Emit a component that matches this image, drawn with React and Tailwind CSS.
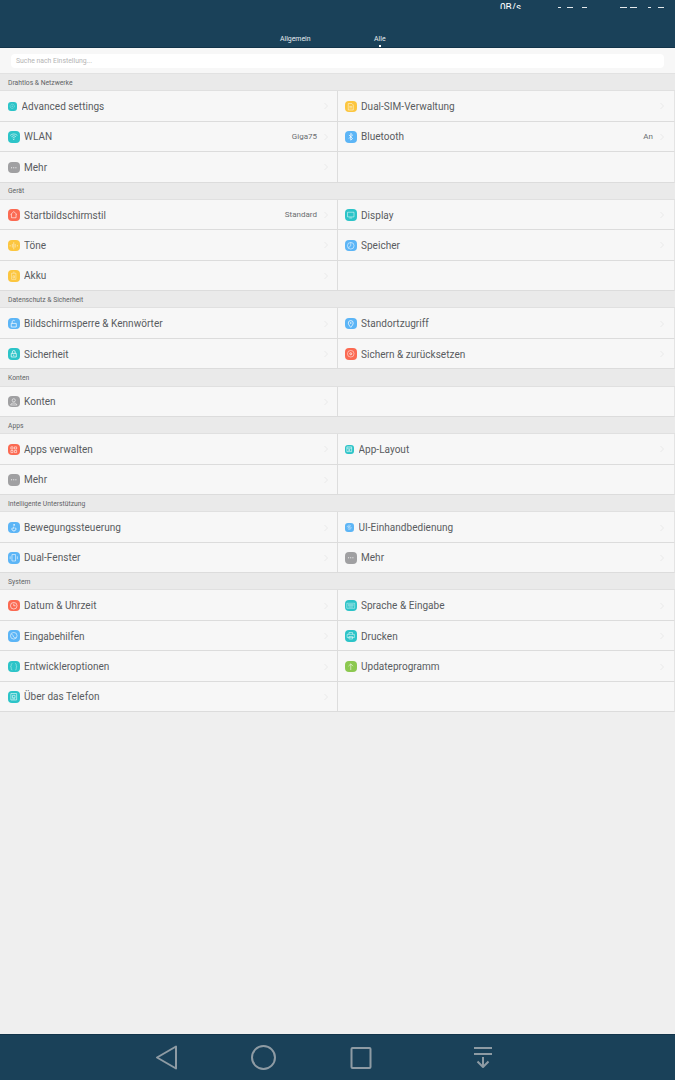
const ICONS = {
  gear: (
    <>
      <circle cx="8" cy="8" r="4" fill="none" stroke="#fff" strokeOpacity=".5" strokeWidth="1.4" strokeDasharray="1.4 .7" />
      <circle cx="8" cy="8" r="1.5" fill="#fff" fillOpacity=".35" />
    </>
  ),
  wifi: (
    <>
      <path d="M3 6.2a7 7 0 0 1 10 0M4.8 8a4.5 4.5 0 0 1 6.4 0M6.5 9.8a2 2 0 0 1 3 0" fill="none" stroke="#fff" strokeOpacity=".75" strokeWidth="1" />
      <circle cx="8" cy="11.6" r=".9" fill="#fff" fillOpacity=".8" />
    </>
  ),
  more: (
    <>
      <circle cx="5" cy="8" r=".8" fill="#fff" />
      <circle cx="8" cy="8" r=".8" fill="#fff" />
      <circle cx="11" cy="8" r=".8" fill="#fff" />
    </>
  ),
  sim: <path d="M4.5 3.5h5l2 2v7h-7zM6 7.5h4M6 9.5h4" fill="none" stroke="#fff" strokeOpacity=".7" strokeWidth="1" />,
  bluetooth: <path d="M5.5 5.5l5 5-2.5 2.2V3.3l2.5 2.2-5 5" fill="none" stroke="#fff" strokeWidth="1" />,
  home: <path d="M3.5 7.8L8 3.6l4.5 4.2M4.8 7v5.2h6.4V7" fill="none" stroke="#fff" strokeOpacity=".85" strokeWidth="1" />,
  sound: <path d="M8 3v10M6 5.5v5M10 5.5v5M3 7v2M13 7v2" fill="none" stroke="#fff" strokeOpacity=".65" strokeWidth="1" />,
  battery: <path d="M5 4.5h6v8.5H5zM6.8 3h2.4M7 8h2v3H7z" fill="none" stroke="#fff" strokeOpacity=".55" strokeWidth="1" />,
  display: <path d="M3.5 4.5h9v6.5h-9zM6 12.5h4" fill="none" stroke="#fff" strokeOpacity=".7" strokeWidth="1" />,
  storage: (
    <>
      <circle cx="8" cy="8" r="4.6" fill="none" stroke="#fff" strokeOpacity=".75" strokeWidth="1" />
      <path d="M8 3.4V8L4.6 11" fill="none" stroke="#fff" strokeOpacity=".75" strokeWidth="1" />
    </>
  ),
  lockOpen: <path d="M4.5 7.5h7v5h-7zM5.8 7.5V5.2a2 2 0 0 1 3.7-1" fill="none" stroke="#fff" strokeWidth="1" />,
  lock: (
    <>
      <path d="M4.5 7.5h7v5h-7zM6 7.5V5.5a2 2 0 0 1 4 0v2" fill="none" stroke="#fff" strokeWidth="1" />
      <circle cx="8" cy="10" r=".8" fill="#fff" />
    </>
  ),
  pin: (
    <>
      <path d="M8 13c-2-2.5-3.4-4.2-3.4-6a3.4 3.4 0 0 1 6.8 0c0 1.8-1.4 3.5-3.4 6z" fill="none" stroke="#fff" strokeWidth="1" />
      <circle cx="8" cy="7" r="1" fill="#fff" />
    </>
  ),
  backup: (
    <>
      <circle cx="8" cy="8" r="4.6" fill="none" stroke="#fff" strokeOpacity=".7" strokeWidth="1" />
      <circle cx="8" cy="8" r="1.4" fill="none" stroke="#fff" strokeWidth="1" />
    </>
  ),
  user: (
    <>
      <circle cx="8" cy="6" r="2.2" fill="none" stroke="#fff" strokeOpacity=".8" strokeWidth="1" />
      <path d="M3.6 12.5c.5-2 2.3-2.7 4.4-2.7s3.9.7 4.4 2.7z" fill="none" stroke="#fff" strokeOpacity=".8" strokeWidth="1" />
    </>
  ),
  apps: <path d="M4 4h3v3H4zM9 4h3v3H9zM4 9h3v3H4zM9 9h3v3H9z" fill="none" stroke="#fff" strokeOpacity=".8" strokeWidth="1" />,
  appLayout: <path d="M3.5 3.5h9v9h-9zM3.5 6h9M7 8.5h2v2H7z" fill="none" stroke="#fff" strokeWidth="1.1" />,
  motion: (
    <>
      <circle cx="8.5" cy="4" r="1.1" fill="#fff" />
      <path d="M8 6.5v3M6 8a2.8 2.8 0 1 0 4.5 0" fill="none" stroke="#fff" strokeWidth="1.1" />
    </>
  ),
  oneHand: <path d="M4 8a4 4 0 0 1 7-2.6M12 8a4 4 0 0 1-7 2.6M6.5 6.5h3v3h-3z" fill="none" stroke="#fff" strokeOpacity=".8" strokeWidth="1" />,
  dual: <path d="M5.5 3.5h5v9h-5zM3 6v4M13 6v4" fill="none" stroke="#fff" strokeOpacity=".8" strokeWidth="1" />,
  clock: (
    <>
      <circle cx="8" cy="8" r="4.6" fill="none" stroke="#fff" strokeOpacity=".85" strokeWidth="1" />
      <path d="M8 5v3h2.6" fill="none" stroke="#fff" strokeOpacity=".85" strokeWidth="1" />
    </>
  ),
  keyboard: <path d="M2.5 4.5h11v7h-11zM4 6.5h8M4 8h8M5 9.8h6" fill="none" stroke="#fff" strokeOpacity=".6" strokeWidth="1" />,
  access: (
    <>
      <circle cx="8" cy="8" r="4.6" fill="none" stroke="#fff" strokeOpacity=".8" strokeWidth="1" />
      <path d="M5 5.5c1.5 1.5 2.5 2.7 3 4.5 1 .8 2 .8 3 .3" fill="none" stroke="#fff" strokeOpacity=".8" strokeWidth="1" />
    </>
  ),
  print: <path d="M5.5 6V3.5h5V6M3 6h10v4.5H3zM5.5 9h5v3.5h-5z" fill="none" stroke="#fff" strokeOpacity=".7" strokeWidth="1" />,
  dev: <path d="M6 3.5c-1.5 0-1.5 1-1.5 2.5S4 8 3.5 8c.5 0 1 .5 1 2s0 2.5 1.5 2.5M10 3.5c1.5 0 1.5 1 1.5 2.5s.5 2 1 2c-.5 0-1 .5-1 2s0 2.5-1.5 2.5" fill="none" stroke="#fff" strokeOpacity=".55" strokeWidth="1" />,
  update: <path d="M8 12.5V4M4.8 7.2L8 4l3.2 3.2" fill="none" stroke="#fff" strokeOpacity=".8" strokeWidth="1" />,
  about: <path d="M4 3.5h8v9H4zM6.2 6h3.6v3.5H6.2zM6 11h4" fill="none" stroke="#fff" strokeOpacity=".8" strokeWidth="1" />,
};

const COLORS = {
  teal: "bg-[#2cc4c8]",
  yellow: "bg-[#fcc63f]",
  blue: "bg-[#5cb5f6]",
  gray: "bg-[#a0a0a2]",
  red: "bg-[#fb6a52]",
  green: "bg-[#8cc850]",
};

const SECTIONS = [
  {
    title: "Drahtlos & Netzwerke",
    rows: [
      [{ label: "Advanced settings", icon: "gear", color: "teal", small: true }, { label: "Dual-SIM-Verwaltung", icon: "sim", color: "yellow" }],
      [{ label: "WLAN", icon: "wifi", color: "teal", value: "Giga75" }, { label: "Bluetooth", icon: "bluetooth", color: "blue", value: "An" }],
      [{ label: "Mehr", icon: "more", color: "gray" }, null],
    ],
  },
  {
    title: "Gerät",
    rows: [
      [{ label: "Startbildschirmstil", icon: "home", color: "red", value: "Standard" }, { label: "Display", icon: "display", color: "teal" }],
      [{ label: "Töne", icon: "sound", color: "yellow" }, { label: "Speicher", icon: "storage", color: "blue" }],
      [{ label: "Akku", icon: "battery", color: "yellow" }, null],
    ],
  },
  {
    title: "Datenschutz & Sicherheit",
    rows: [
      [{ label: "Bildschirmsperre & Kennwörter", icon: "lockOpen", color: "blue" }, { label: "Standortzugriff", icon: "pin", color: "blue" }],
      [{ label: "Sicherheit", icon: "lock", color: "teal" }, { label: "Sichern & zurücksetzen", icon: "backup", color: "red" }],
    ],
  },
  {
    title: "Konten",
    rows: [[{ label: "Konten", icon: "user", color: "gray" }, null]],
  },
  {
    title: "Apps",
    rows: [
      [{ label: "Apps verwalten", icon: "apps", color: "red" }, { label: "App-Layout", icon: "appLayout", color: "teal", small: true }],
      [{ label: "Mehr", icon: "more", color: "gray" }, null],
    ],
  },
  {
    title: "Intelligente Unterstützung",
    rows: [
      [{ label: "Bewegungssteuerung", icon: "motion", color: "blue" }, { label: "UI-Einhandbedienung", icon: "oneHand", color: "blue", small: true }],
      [{ label: "Dual-Fenster", icon: "dual", color: "blue" }, { label: "Mehr", icon: "more", color: "gray" }],
    ],
  },
  {
    title: "System",
    rows: [
      [{ label: "Datum & Uhrzeit", icon: "clock", color: "red" }, { label: "Sprache & Eingabe", icon: "keyboard", color: "teal" }],
      [{ label: "Eingabehilfen", icon: "access", color: "blue" }, { label: "Drucken", icon: "print", color: "teal" }],
      [{ label: "Entwickleroptionen", icon: "dev", color: "teal" }, { label: "Updateprogramm", icon: "update", color: "green" }],
      [{ label: "Über das Telefon", icon: "about", color: "teal" }, null],
    ],
  },
];

function Cell({ item, right }) {
  const wrapper = right
    ? "flex h-full min-w-0 flex-1 items-center border-l border-[#dddddd] pl-[7px] pr-[9px] pt-px"
    : "flex h-full w-[337px] shrink-0 items-center pl-2 pr-2 pt-px";
  if (!item) return <div className={wrapper} />;
  return (
    <div className={wrapper}>
      <span
        className={`flex shrink-0 items-center justify-center ${COLORS[item.color]} ${
          item.small ? "mr-[5px] h-[8.5px] w-[8.5px] rounded-[3px]" : "mr-[4.5px] h-[11.5px] w-[11.5px] rounded-[4px]"
        }`}
      >
        <svg viewBox="0 0 16 16" className="h-full w-full">
          {ICONS[item.icon]}
        </svg>
      </span>
      <span className="flex-1 truncate text-[10px] tracking-[0.03px] text-[#595c60]">{item.label}</span>
      {item.value && <span className="mr-[6px] text-[8px] text-[#6a6d70]">{item.value}</span>}
      <svg viewBox="0 0 6 8" className="h-2 w-[6px] shrink-0">
        <path d="M1.5 1l3 3-3 3" fill="none" stroke="#e4e4e4" strokeWidth=".8" />
      </svg>
    </div>
  );
}

export default function App() {
  return (
    <div className="flex h-[1080px] w-[675px] flex-col overflow-hidden bg-[#efefef] font-['Roboto',sans-serif]">
      {/* top bar, the status bar is cut off at y=9 in the shot */}
      <div className="flex h-[48px] shrink-0 flex-col border-b border-[#12344a] bg-[#1a4159] text-white">
        <div className="mt-[3px] flex h-[6px] items-end overflow-hidden">
          <span className="ml-[500px] mb-[-5px] self-start text-[10px] leading-[10px]">0B/s</span>
          <span className="ml-[37px] mb-px h-[1.5px] w-[3px] bg-[#e6eaec]" />
          <span className="ml-[6px] mb-px h-[1.5px] w-[6px] bg-[#e6eaec]" />
          <span className="ml-[9px] mb-px h-[1.5px] w-[5px] bg-[#e6eaec]" />
          <span className="ml-[33px] mb-px h-[1.5px] w-[7px] bg-[#e6eaec]" />
          <span className="ml-[3px] mb-px h-[1.5px] w-[7px] bg-[#e6eaec]" />
          <span className="ml-[11px] mb-px h-[1.5px] w-[3px] bg-[#e6eaec]" />
          <span className="ml-[7px] mb-px h-[1.5px] w-[6px] bg-[#e6eaec]" />
        </div>
        <div className="mt-[26px] flex items-start">
          <span className="ml-[280px] text-[6.9px] leading-[9px] text-[#e8edf0]">Allgemein</span>
          <div className="ml-[63.5px] flex flex-col items-center">
            <span className="text-[6.9px] leading-[9px] text-[#e8edf0]">Alle</span>
            <span className="mt-px h-[2px] w-[2px] bg-white" />
          </div>
        </div>
      </div>

      <div className="flex h-[26px] shrink-0 items-center border-b border-[#e2e2e2] bg-[#f7f7f7] px-[11px]">
        <div className="flex h-[14px] w-full items-center rounded-[4px] bg-white pl-[5px] pt-px text-[6.85px] text-[#b4b4b4]">
          Suche nach Einstellung...
        </div>
      </div>

      {SECTIONS.map((section) => (
        <div key={section.title}>
          <div className="flex h-[17.25px] items-center border-b border-[#e0e0e0] bg-[#eaeaea] pl-2 pt-px text-[6.75px] text-[#5f6366]">
            {section.title}
          </div>
          {section.rows.map((row, i) => (
            <div key={i} className="flex h-[30.45px] border-r border-b border-r-[#e4e4e4] border-b-[#dcdcdc] bg-[#f7f7f7]">
              <Cell item={row[0]} />
              <Cell item={row[1]} right />
            </div>
          ))}
        </div>
      ))}

      <div className="flex-1" />

      <div className="h-[46px] shrink-0 border-t border-[#12344a] bg-[#1a4159]">
        <svg viewBox="0 0 675 45" className="h-[45px] w-[675px]">
          <g fill="none" stroke="#8e9ba4" strokeWidth="2" strokeLinejoin="round">
            <path d="M176 11.5v22l-19-11z" />
            <circle cx="263.5" cy="22.5" r="11.5" />
            <rect x="351.5" y="13" width="19" height="20" rx="1" />
            <path d="M474 13h18M474 19h18M483 22v10M477.5 26.5l5.5 5.5 5.5-5.5" />
          </g>
        </svg>
      </div>
    </div>
  );
}
